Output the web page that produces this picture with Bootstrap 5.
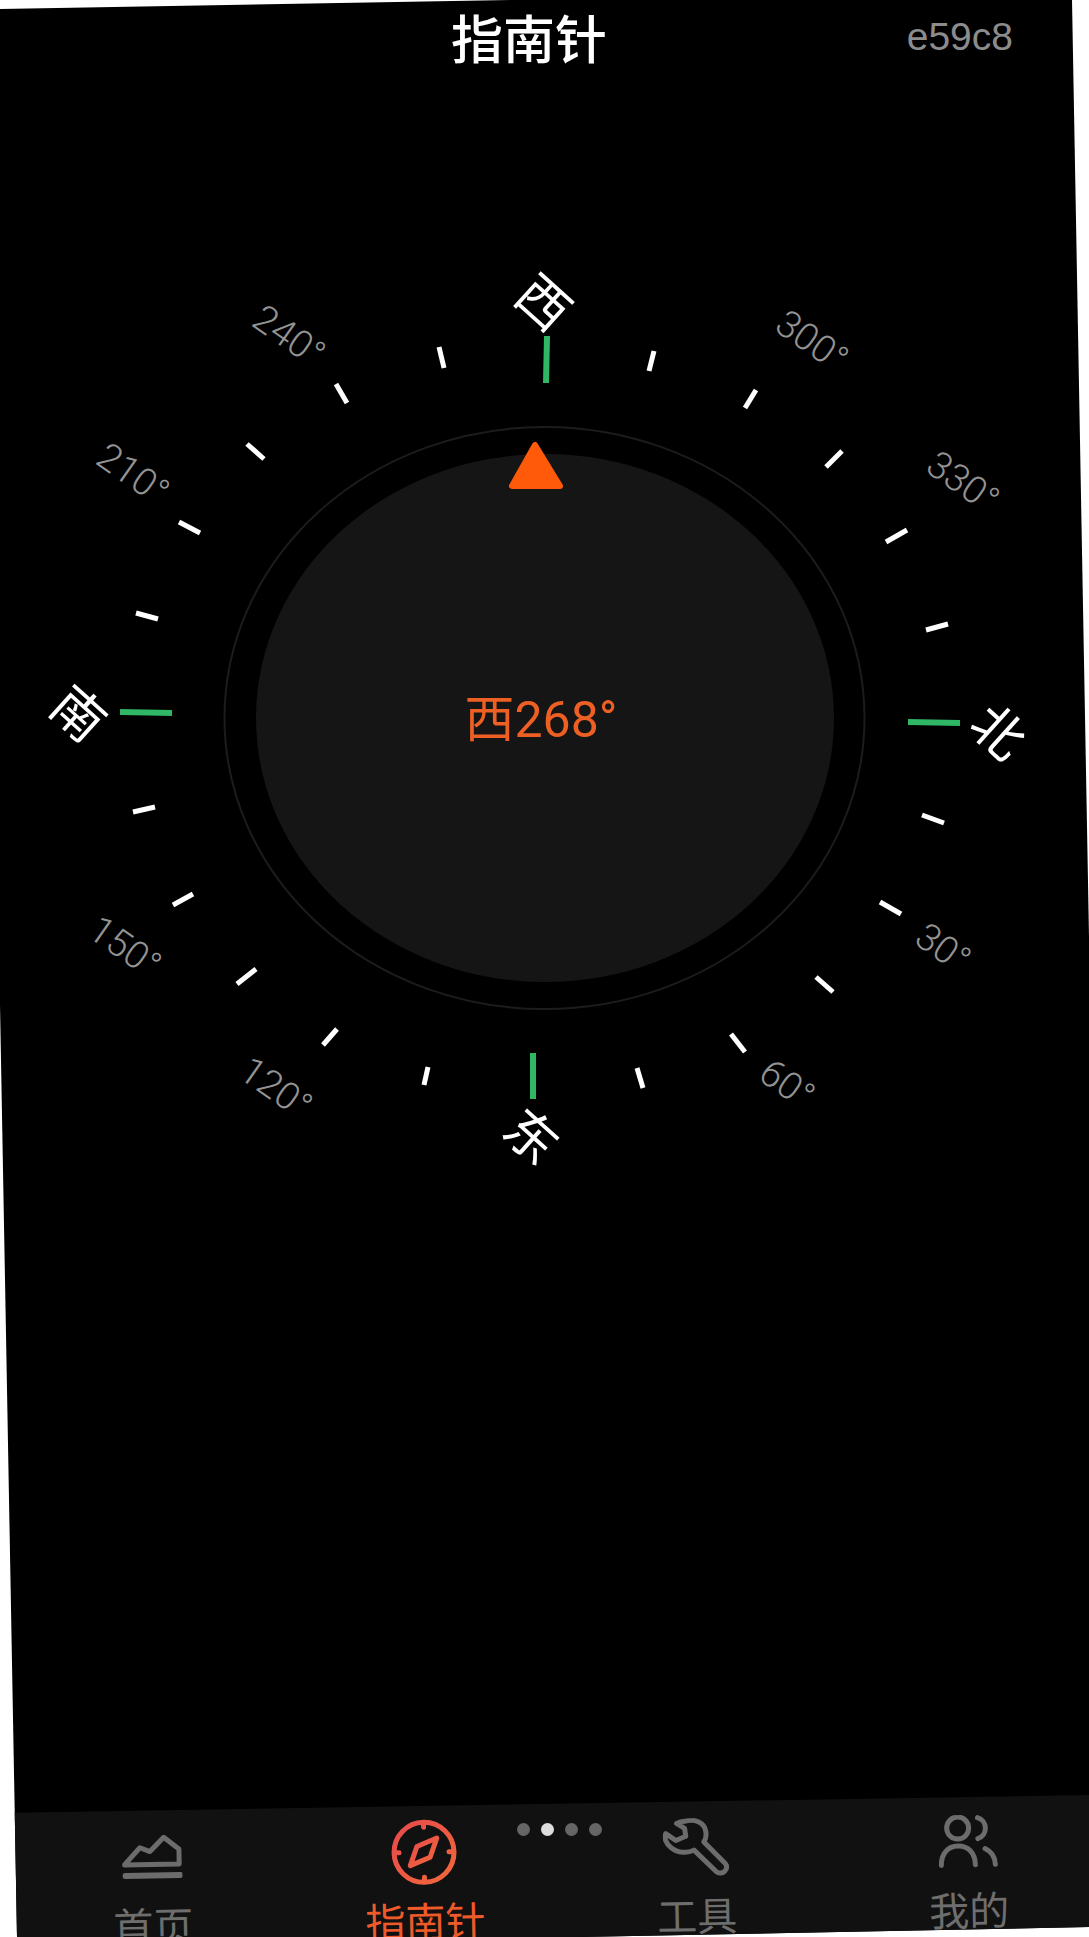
<!DOCTYPE html>
<html lang="zh-CN">

<head>
    <meta charset="UTF-8" />
    <meta name="viewport" content="width=device-width, initial-scale=1" />
    <title>指南针</title>

    <link href="https://cdn.jsdelivr.net/npm/bootstrap@5.3.0/dist/css/bootstrap.min.css" rel="stylesheet" />

    <style>
        body {
            background-color: #fff;
            font-family: "Liberation Sans", "Noto Sans CJK SC", sans-serif;
        }

        /* the reference is a slightly warped photo, white shows at the edges */
        .screen {
            width: 1089px;
            height: 1937px;
            background-color: #000;
            overflow: hidden;
            clip-path: polygon(0 9px, 514px 0, 1072px 0, 1089px 937px, 1089px 1927px, 580px 1937px, 17px 1937px, 0 1005px);
        }

        .top-bar {
            height: 80px;
            padding: 0 76px 0 451px;
        }

        .page-title {
            font-size: 52px;
            font-weight: 500;
            color: #fff;
            line-height: 82px;
        }

        .device-code {
            font-size: 39px;
            color: #8c8c8c;
            line-height: 74px;
        }

        .dial {
            width: 1089px;
            height: 1715px;
        }

        .dial-ring {
            fill: none;
            stroke: #1c1c1c;
            stroke-width: 2;
        }

        .dial-disc {
            fill: #151515;
        }

        .tick {
            stroke: #fff;
            stroke-width: 5;
        }

        .tick-main {
            stroke: #2fb765;
            stroke-width: 6;
        }

        .pointer {
            fill: #ff5a0a;
            stroke: #ff5a0a;
            stroke-width: 6;
            stroke-linejoin: round;
        }

        .dir-label {
            font-family: "Noto Sans CJK SC", sans-serif;
            font-size: 52px;
            font-weight: 400;
            fill: #fff;
            text-anchor: middle;
            dominant-baseline: central;
        }

        .deg-label {
            font-family: Roboto, "Liberation Sans", sans-serif;
            font-size: 38px;
            font-weight: 300;
            fill: #939393;
            text-anchor: middle;
            dominant-baseline: central;
        }

        .heading-now {
            font-family: Roboto, "Noto Sans CJK SC", sans-serif;
            font-size: 50px;
            fill: #ee5f24;
            text-anchor: middle;
            dominant-baseline: central;
        }

        .tab-bar {
            height: 142px;
            background-color: #111;
            clip-path: polygon(0 18px, 100% 0, 100% 100%, 0 100%);
        }

        .tab-row {
            width: 1089px;
            padding: 23px 0 0 16px;
            transform: rotate(-1.1deg);
            transform-origin: 50% 55px;
        }

        .tab-item {
            flex: 0 0 272px;
            color: #6e6e6e;
            font-family: "Noto Sans CJK SC", sans-serif;
            font-size: 40px;
            line-height: 40px;
        }

        .tab-item.active-tab {
            color: #ee5a2a;
        }

        .tab-icon {
            height: 64px;
            margin-bottom: 15px;
        }

        .tab-icon svg {
            fill: none;
            stroke: #6c6c6c;
            stroke-width: 5;
            stroke-linecap: round;
            stroke-linejoin: round;
        }

        .pager {
            left: 517px;
            top: 28px;
            gap: 11px;
        }

        .pager span {
            width: 13px;
            height: 13px;
            background-color: #666;
        }

        .pager span.on {
            background-color: #ddd;
        }
    </style>
</head>

<body class="m-0">
    <div class="screen d-flex flex-column">
        <header class="top-bar d-flex">
            <div class="page-title">指南针</div>
            <div class="device-code ms-auto">e59c8</div>
        </header>

        <main class="flex-grow-1">
            <!-- viewBox starts at y=80 so coords below are page coords -->
            <svg class="dial d-block" viewBox="0 80 1089 1715">
                <ellipse class="dial-ring" cx="544.5" cy="718" rx="320" ry="291" />
                <ellipse class="dial-disc" cx="545" cy="718" rx="289" ry="264" />

                <g class="tick">
                    <line x1="439" y1="347" x2="444" y2="368" />
                    <line x1="654" y1="351" x2="649" y2="371" />
                    <line x1="336" y1="384" x2="347" y2="403" />
                    <line x1="756" y1="390" x2="745" y2="408" />
                    <line x1="247" y1="444" x2="264" y2="459" />
                    <line x1="842" y1="451" x2="826" y2="467" />
                    <line x1="179" y1="522" x2="200" y2="533" />
                    <line x1="907" y1="530" x2="886" y2="542" />
                    <line x1="136" y1="613" x2="158" y2="619" />
                    <line x1="948" y1="624" x2="926" y2="630" />
                    <line x1="133" y1="812" x2="155" y2="807" />
                    <line x1="922" y1="815" x2="944" y2="823" />
                    <line x1="173" y1="905" x2="193" y2="894" />
                    <line x1="880" y1="902" x2="901" y2="914" />
                    <line x1="237" y1="984" x2="256" y2="969" />
                    <line x1="816" y1="977" x2="833" y2="992" />
                    <line x1="323" y1="1045" x2="337" y2="1029" />
                    <line x1="731" y1="1034" x2="745" y2="1052" />
                    <line x1="424" y1="1085" x2="428" y2="1067" />
                    <line x1="643" y1="1088" x2="637" y2="1068" />
                </g>
                <g class="tick-main">
                    <line x1="547" y1="336" x2="546" y2="383" />
                    <line x1="120" y1="712" x2="172" y2="713" />
                    <line x1="908" y1="722" x2="960" y2="723" />
                    <line x1="533" y1="1053" x2="533" y2="1099" />
                </g>

                <polygon class="pointer" points="535,445 512,486 560,486" />

                <text class="dir-label" transform="translate(546 300) rotate(42)">西</text>
                <text class="dir-label" transform="translate(1001 729) rotate(42)">北</text>
                <text class="dir-label" transform="translate(534 1134) rotate(42)">东</text>
                <text class="dir-label" transform="translate(81 711) rotate(42)">南</text>

                <text class="deg-label" transform="translate(289 336) rotate(35)">240°</text>
                <text class="deg-label" transform="translate(812 341) rotate(35)">300°</text>
                <text class="deg-label" transform="translate(963 482) rotate(35)">330°</text>
                <text class="deg-label" transform="translate(133 474) rotate(35)">210°</text>
                <text class="deg-label" transform="translate(125 947) rotate(35)">150°</text>
                <text class="deg-label" transform="translate(276 1088) rotate(35)">120°</text>
                <text class="deg-label" transform="translate(787 1084) rotate(35)">60°</text>
                <text class="deg-label" transform="translate(943 948) rotate(35)">30°</text>

                <text class="heading-now" x="541" y="720">西268°</text>
            </svg>
        </main>

        <nav class="tab-bar position-relative">
            <div class="tab-row d-flex">
                <div class="tab-item d-flex flex-column align-items-center">
                    <div class="tab-icon d-flex align-items-center">
                        <svg width="60" height="46" viewBox="0 0 60 46">
                            <path d="M2 30 L18 13 L28 17 L42 3 L57 15 V30 Z" />
                            <path d="M3 41 H58" stroke-width="6" />
                        </svg>
                    </div>
                    <span>首页</span>
                </div>
                <div class="tab-item active-tab d-flex flex-column align-items-center">
                    <div class="tab-icon d-flex align-items-center">
                        <svg width="70" height="70" viewBox="0 0 70 70">
                            <defs>
                                <linearGradient id="compassGrad" x1="0" y1="0" x2="1" y2="1">
                                    <stop offset="0" stop-color="#e84a4c" />
                                    <stop offset="1" stop-color="#f0683a" />
                                </linearGradient>
                            </defs>
                            <g stroke="url(#compassGrad)">
                                <circle cx="35" cy="35" r="30" />
                                <path d="M35 6 V10 M35 60 V64 M6 35 H10 M60 35 H64" />
                                <path d="M48 21 L41 40 L21 48 L28 29 Z" />
                            </g>
                        </svg>
                    </div>
                    <span>指南针</span>
                </div>
                <div class="tab-item d-flex flex-column align-items-center">
                    <div class="tab-icon d-flex align-items-center">
                        <svg width="66" height="58" viewBox="0 0 66 58">
                            <path d="M22 3 C33 0 42 5 43 13 C44 18 43 21 41 24 L62 46 Q65 50 61 54 Q57 57 53 54 L31 32 C25 35 15 35 8 29 C3 25 1 19 3 15 L13 22 L23 18 L22 10 L14 5 Q18 3 22 3 Z" />
                        </svg>
                    </div>
                    <span>工具</span>
                </div>
                <div class="tab-item d-flex flex-column align-items-center">
                    <div class="tab-icon d-flex align-items-center">
                        <svg width="60" height="54" viewBox="0 0 60 54">
                            <circle cx="20" cy="13" r="11" />
                            <path d="M40 3 A11 11 0 0 1 40 24" />
                            <path d="M3 50 C3 38 10 31 20 31 C30 31 37 38 37 50" />
                            <path d="M47 34 C53 37 57 43 57 50" />
                        </svg>
                    </div>
                    <span>我的</span>
                </div>
            </div>
            <div class="pager position-absolute d-flex">
                <span class="rounded-circle"></span>
                <span class="rounded-circle on"></span>
                <span class="rounded-circle"></span>
                <span class="rounded-circle"></span>
            </div>
        </nav>
    </div>

    <script src="https://cdn.jsdelivr.net/npm/bootstrap@5.3.0/dist/js/bootstrap.bundle.min.js"></script>
</body>

</html>
